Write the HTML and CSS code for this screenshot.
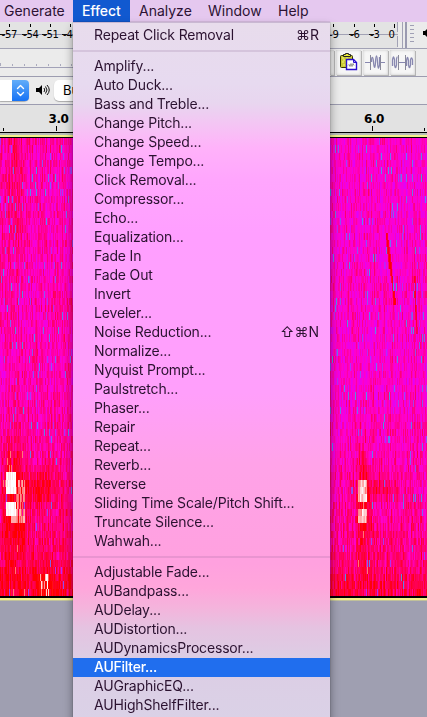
FILE: index.html
```html
<!DOCTYPE html>
<html lang="en">
<head>
<meta charset="utf-8">
<title>Effect menu</title>
<link rel="stylesheet" href="styles.css">
</head>
<body>
<div class="screen">
  <nav class="menubar">
    <span class="title generate">Generate</span><span class="title effect">Effect</span><span class="title analyze">Analyze</span><span class="title window">Window</span><span class="title help">Help</span>
  </nav>

  <div class="row meter">
    <svg width="73" height="26" class="scale">
      <path d="M0 12.500H73" stroke="#9292ae"/>
      <path d="M9.500 2v3M30.500 2v3M50.500 2v3M70.500 2v3" stroke="#000"/>
      <path d="M0 12.500h5M22 12.500h5M42 12.500h5M62 12.500h5" stroke="#111"/>
      <text x="1.500" y="16">-57</text><text x="23" y="16">-54</text><text x="43" y="16">-51</text><text x="63" y="16">-48</text>
    </svg>
    <svg width="97" height="26" class="scale right">
      <path d="M0 12.500H69" stroke="#a2a2b5"/>
      <path d="M3.500 2v3M24.500 2v3M44.500 2v3M64.500 2v4" stroke="#000"/>
      <path d="M19 12.500h5M39 12.500h5" stroke="#111"/>
      <text x="-1" y="16">-9</text><text x="20" y="16">-6</text><text x="40" y="16">-3</text><text x="58.500" y="16">0</text>
      <path d="M68 0h29v26H68z" fill="#ebebeb"/>
      <path d="M67.500 0v10M67.500 14v11M72.500 0v26" stroke="#a2a2b5"/>
      <path d="M76 0v26" stroke="#9a9ab0" stroke-width="2"/>
      <path d="M80 3.500h4M80 7.500h4M80 11.500h4M80 15.500h4M80 19.500h4" stroke="#a0a0b5"/>
      <path d="M93 9h2l2-2v8l-2-2h-2z"/>
    </svg>
  </div>

  <div class="row tools">
    <svg width="73" height="28">
      <path d="M0.500 14v3M12.500 15v2M24.500 15v2M36.500 15v2M48.500 15v2M60.500 15v2M71.500 15v2" stroke="#aaaabd"/>
      <path d="M0 18.500H73" stroke="#a2a2b8"/>
    </svg>
    <div class="buttons right">
      <span class="tool stub"></span>
      <span class="tool"><svg width="25" height="25" viewBox="0 0 25 25">
        <rect x="4.500" y="5.500" width="12" height="12" rx="1" fill="#c9c935" stroke="#333300"/>
        <path d="M6 8h2m2 0h2m-5 2h2m2 0h2m-7 2h2m-1 3h2" stroke="#f2f27a"/>
        <path d="M7.500 6.500h7v-2h-2v-1h-3v1h-2z" fill="#eaea38" stroke="#222"/>
        <path d="M10.500 9.500h7l3 3v7h-10z" fill="#fff" stroke="#2a0dd0" stroke-width="1.400"/>
        <path d="M17.500 9.500v3h3" fill="none" stroke="#2a0dd0"/>
        <path d="M12 15.500l1-1 1 2 1-3 1 3 1-3 1 2" fill="none" stroke="#777" stroke-width=".8"/>
      </svg></span>
      <span class="tool"><svg width="25" height="25" viewBox="0 0 25 25" fill="none" stroke="#8888b0">
        <path d="M2 12.500h5.500M18 12.500h4"/><path d="M7.500 5v15M17.500 5v15" stroke="#898999"/>
        <path d="M8.500 12c0-6 1.500-6 2 0s1.500 8 2 0 1.500-8 2 0 1 7 2 3V7" stroke-width="1.300"/>
      </svg></span>
      <span class="tool"><svg width="25" height="25" viewBox="0 0 25 25" fill="none" stroke="#8888b0">
        <path d="M8.500 12.500h7"/><path d="M8.500 5v15M15.500 5v15" stroke="#898999"/>
        <path d="M2.500 16V10q1-6 2 0v5q1 5 2 0V9q.5-2 1-2M16.500 16v-5q1-7 2 0v4q1 5 2 0v-5q1-4 2 0v5" stroke-width="1.300"/>
      </svg></span>
    </div>
  </div>

  <div class="row devices">
    <span class="combo"><svg width="17" height="21" viewBox="0 0 17 21" fill="none" stroke="#fff" stroke-width="1.400" stroke-linecap="round" stroke-linejoin="round"><path d="M5.500 8.500l3-3 3 3M5.500 12.500l3 3 3-3"/></svg></span>
    <svg class="speaker" width="14" height="14" viewBox="0 0 14 14"><path d="M0 5h3l3-3v10L3 9H0z"/><path d="M8 5q1.500 2 0 4M9.500 3.500q3 3.500 0 7M11 2q4.500 5 0 10" fill="none" stroke="#111"/></svg>
    <span class="combo output">Bu</span>
  </div>

  <div class="row ruler">
    <svg width="73" height="27"><text x="58.500" y="18" text-anchor="middle">3.0</text><path d="M3.500 23v3M56.500 21v5" stroke="#000"/></svg>
    <svg width="97" height="27" class="right"><text x="44" y="18" text-anchor="middle">6.0</text><path d="M42.500 21v5M94.500 23v3" stroke="#000"/></svg>
  </div>

  <div class="track"><canvas id="spectrogram" width="427" height="458"></canvas></div>

  <div class="menu">
    <div class="item"><span>Repeat Click Removal</span><span class="key">⌘R</span></div>
    <hr>
    <div class="item">Amplify...</div>
    <div class="item">Auto Duck...</div>
    <div class="item">Bass and Treble...</div>
    <div class="item">Change Pitch...</div>
    <div class="item">Change Speed...</div>
    <div class="item">Change Tempo...</div>
    <div class="item">Click Removal...</div>
    <div class="item">Compressor...</div>
    <div class="item">Echo...</div>
    <div class="item">Equalization...</div>
    <div class="item">Fade In</div>
    <div class="item">Fade Out</div>
    <div class="item">Invert</div>
    <div class="item">Leveler...</div>
    <div class="item"><span>Noise Reduction...</span><span class="key">⇧⌘N</span></div>
    <div class="item">Normalize...</div>
    <div class="item">Nyquist Prompt...</div>
    <div class="item">Paulstretch...</div>
    <div class="item">Phaser...</div>
    <div class="item">Repair</div>
    <div class="item">Repeat...</div>
    <div class="item">Reverb...</div>
    <div class="item">Reverse</div>
    <div class="item">Sliding Time Scale/Pitch Shift...</div>
    <div class="item">Truncate Silence...</div>
    <div class="item">Wahwah...</div>
    <hr>
    <div class="item">Adjustable Fade...</div>
    <div class="item">AUBandpass...</div>
    <div class="item">AUDelay...</div>
    <div class="item">AUDistortion...</div>
    <div class="item">AUDynamicsProcessor...</div>
    <div class="item selected">AUFilter...</div>
    <div class="item">AUGraphicEQ...</div>
    <div class="item">AUHighShelfFilter...</div>
  </div>
</div>
<script src="spectrogram.js"></script>
</body>
</html>
```

FILE: styles.css
```css
* { box-sizing: border-box; }
body { margin: 0; }
svg { display: block; }
.screen {
  position: relative;
  display: flex;
  flex-direction: column;
  width: 427px;
  height: 717px;
  overflow: hidden;
  background: #9f9fb1;
  font-family: Inter, "Liberation Sans", sans-serif;
}
.menubar {
  display: flex;
  flex: none;
  height: 22px;
  background: #e5c8ef;
  color: #2c1233;
  font-size: 14px;
  line-height: 22px;
  white-space: nowrap;
}
.title { flex: none; }
.generate { width: 73px; padding-left: 4px; }
.effect { width: 57px; padding-left: 9px; background: #1159d0; color: #fff; font-weight: 500; letter-spacing: -.1px; }
.analyze { width: 69px; padding-left: 9px; }
.window { width: 70px; padding-left: 9px; }
.help { padding-left: 9px; }
.row {
  display: flex;
  flex: none;
  justify-content: space-between;
  background: #ebebeb;
}
.meter { height: 27px; background: #e3e3e3; border-bottom: 1px solid #a2a2b5; }
.scale text { font: 10px "DejaVu Sans", sans-serif; letter-spacing: -.2px; }
.tools { height: 28px; border-bottom: 1px solid #9c9cb0; }
.buttons { display: flex; gap: 2px; width: 97px; padding-top: 1px; }
.tool {
  width: 25px;
  height: 25px;
  background: #f6f6f6;
  box-shadow: inset 0 0 3px #c4c4c4, 1px 1px 0 #b4b4b4;
}
.stub { width: 4px; }
.devices { height: 28px; border-bottom: 1px solid #9c9cb0; justify-content: flex-start; padding-top: 3px; }
.combo {
  display: flex;
  justify-content: flex-end;
  width: 29px;
  height: 21px;
  border-radius: 0 5px 5px 0;
  background: #fff;
  box-shadow: 0 1px 1px #aaa;
}
.combo svg { background: linear-gradient(#62adf9, #1672f5); border-radius: 0 4px 4px 0; }
.speaker { margin: 3px 0 0 7px; }
.output {
  width: 30px;
  margin-left: 4px;
  padding-left: 9px;
  justify-content: flex-start;
  border-radius: 5px 0 0 5px;
  font-size: 13px;
  line-height: 20px;
}
.ruler { height: 27px; background: #e2e2e2; }
.ruler text { font: bold 12px "DejaVu Sans", sans-serif; letter-spacing: -.4px; }
.track {
  flex: none;
  height: 469px;
  border-top: 1px solid #000;
  border-bottom: 1px solid #c0c09a;
  background: linear-gradient(#b8bdb8 0 2px, #f4f28c 2px 4px, #000 4px 465px, #f4f28c 465px);
}
#spectrogram { display: block; margin-top: 5px; }
.menu {
  position: absolute;
  left: 73px;
  top: 22px;
  width: 257px;
  height: 706px;
  border-top: 1px solid #c9b8d2;
  padding-top: 3px;
  background: linear-gradient(#e8dcec 0, #e7daf0 60px, #e8d6ef 80px, #f6c2f5 105px, #ffb2fa 125px, #ffa6fd 155px, #ff9fff 210px, #ff9ffb 370px, #ffa2e8 440px, #ffa1df 540px, #ffa6db 565px, #f4b4dc 585px, #e5c3e1 605px, #dccde4 635px, #dad2e7 706px);
  box-shadow: 0 0 1px rgba(0,0,0,.45), 0 5px 9px rgba(0,0,0,.4);
  color: #2b1230;
  font-size: 14px;
}
.item {
  display: flex;
  justify-content: space-between;
  height: 19px;
  padding: 0 11px 0 21px;
  line-height: 17px;
  letter-spacing: -.17px;
  white-space: nowrap;
}
.key { letter-spacing: 0; }
.menu hr { height: 2px; margin: 5px 0; border: 0; background: rgba(120,80,130,.16); }
.selected { background: #206eee; color: #fff; font-weight: 500; letter-spacing: -.25px; }
```

FILE: spectrogram.js
```js
const canvas = document.getElementById("spectrogram");
const ctx = canvas.getContext("2d");
let seed = 90210;
function rnd() {
  seed = (seed + 0x6d2b79f5) | 0;
  let t = Math.imul(seed ^ (seed >>> 15), 1 | seed);
  t = (t + Math.imul(t ^ (t >>> 7), 61 | t)) ^ t;
  return ((t ^ (t >>> 14)) >>> 0) / 4294967296;
}
const stops = [
  [0, 80, 150, 230], [0.12, 155, 70, 240], [0.25, 225, 0, 250],
  [0.4, 255, 0, 205], [0.75, 255, 0, 0], [0.85, 255, 0, 0], [1, 255, 255, 255]
];
function color(v) {
  v = Math.max(0, Math.min(1, v));
  let i = 1;
  while (stops[i][0] < v) i++;
  const a = stops[i - 1], b = stops[i];
  const t = (v - a[0]) / (b[0] - a[0]);
  return "rgb(" + [1, 2, 3].map(k => Math.round(a[k] + (b[k] - a[k]) * t)).join(",") + ")";
}
function glow(x, y, cx, cy, rx, ry) {
  return Math.exp(-(((x - cx) / rx) ** 2) - (((y - cy) / ry) ** 2));
}
const rowHeight = 7.27;
const columns = Array.from({ length: 427 }, () => rnd() - 0.5);
for (let r = 0; r < 63; r++) {
  const top = Math.round(r * rowHeight);
  const bottom = Math.round((r + 1) * rowHeight);
  const y = top + 142;
  for (let x = 0; x < 427; x++) {
    columns[x] = columns[x] * 0.5 + (rnd() - 0.5) * 0.8;
    let v = 0.4 + (x < 80 ? 0.05 : 0) + Math.max(0, (y - 400) / 200) * 0.16;
    v += columns[x] * 0.22 + (rnd() - 0.5) * 0.14;
    v += 0.09 * glow(x, y, 14, 190, 10, 90);
    v += 0.24 * glow(x, y, 14, 500, 11, 50) + 0.2 * glow(x, y, 40, 487, 16, 16);
    v += 0.26 * glow(x, y, 363, 500, 7, 50) + 0.13 * glow(x, y, 380, 490, 16, 9);
    v += 0.18 * glow(x, y, 45, 590, 9, 25) + 0.08 * glow(380, y, 380, 585, 1, 15);
    if (y > 232 && y < 307 && Math.abs(x - (386 + (y - 232) * 0.115)) < 1.2) v = 0.62 + rnd() * 0.13;
    if (y > 276 && y < 337 && Math.abs(x - (414 + (y - 276) * 0.04)) < 0.9) v = 0.6 + rnd() * 0.13;
    v = Math.min(v, 0.86);
    if (rnd() < 0.03 && y > 450 && (x < 25 || (x > 355 && x < 368))) v = 0.92;
    if (x >= 6 && x < 16 && ((y > 472 && y < 495) || (y > 502 && y < 517))) v = 0.98 + rnd() * 0.04;
    if (x >= 11 && x < 18 && y > 515 && y < 524) v = 0.95;
    if (x >= 16 && x < 25 && y > 479 && y < 524 && rnd() < 0.6) v = 0.9 + rnd() * 0.06;
    if (x >= 358 && x < 367 && ((y > 480 && y < 502) || (y > 509 && y < 524))) v = 0.92 + rnd() * 0.08;
    if (x >= 40 && x < 49 && y > 574 && rnd() < 0.5) v = 0.9 + rnd() * 0.1;
    if (rnd() < 0.035 * (y < 450 ? 1 : 0.3)) v = rnd() * 0.18;
    ctx.fillStyle = color(v);
    ctx.fillRect(x, top, 1, bottom - top);
  }
}
```
